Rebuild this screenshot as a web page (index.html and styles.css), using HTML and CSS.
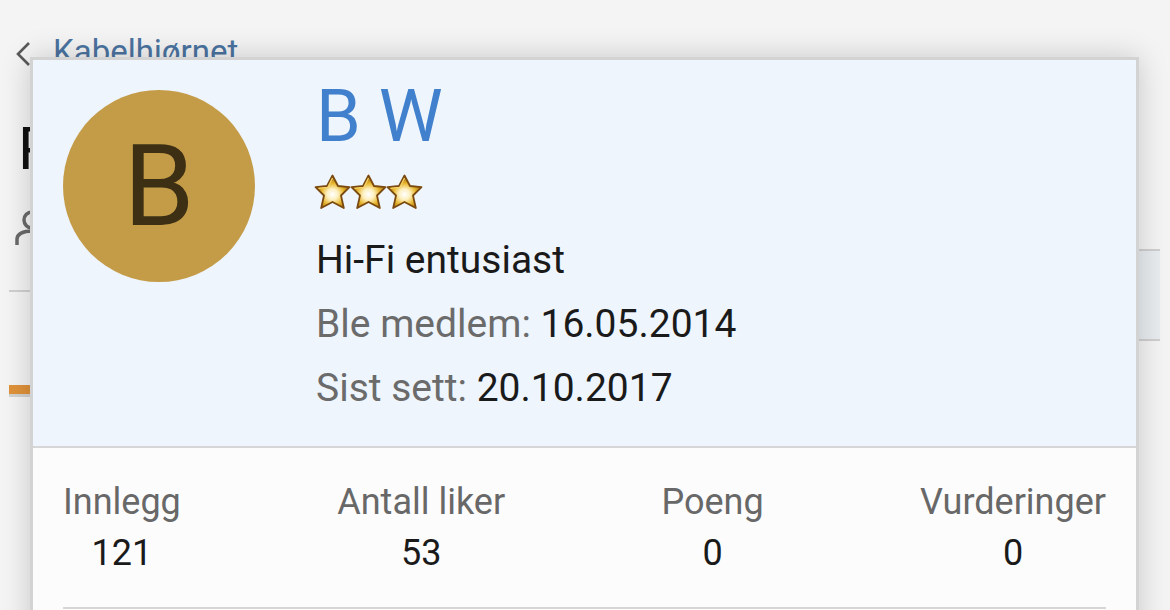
FILE: index.html
```html
<!DOCTYPE html>
<html lang="no">
<head>
<meta charset="utf-8">
<title>Profil</title>
<link rel="stylesheet" href="styles.css">
</head>
<body>
<div class="page">
  <div class="topbar">
    <svg class="chev" width="18" height="26" viewBox="0 0 18 26"><path d="M15 2 L4 13 L15 24" fill="none" stroke="#5a5a5a" stroke-width="2.6"/></svg>
    <span class="crumb">Kabelhjørnet</span>
  </div>
  <div class="head">
    <div class="head-main">
      <div class="title">Profil</div>
      <div class="user-row">
        <svg width="34" height="36" viewBox="0 0 34 36"><circle cx="17" cy="10" r="8" fill="none" stroke="#6a6a6a" stroke-width="3.5"/><path d="M2 35 V29 C2 24 8 21 17 21 C26 21 32 24 32 29 V35" fill="none" stroke="#6a6a6a" stroke-width="3.5"/></svg>
      </div>
    </div>
    <div class="follow"></div>
  </div>
  <div class="tabs"><div class="tab active"></div><div class="tab"></div></div>
</div>

<div class="popup">
  <div class="pop-top">
    <div class="avatar">B</div>
    <div class="info">
      <div class="name">B W</div>
      <div class="stars">
        <svg width="37" height="36" viewBox="0 0 37 36"><use href="#star"/></svg>
        <svg width="37" height="36" viewBox="0 0 37 36"><use href="#star"/></svg>
        <svg width="37" height="36" viewBox="0 0 37 36"><use href="#star"/></svg>
      </div>
      <div class="line rank">Hi-Fi entusiast</div>
      <div class="line"><span class="lbl">Ble medlem:</span> 16.05.2014</div>
      <div class="line"><span class="lbl">Sist sett:</span> 20.10.2017</div>
    </div>
  </div>
  <div class="pop-stats">
    <div class="stat"><div class="s-lbl">Innlegg</div><div class="s-val">121</div></div>
    <div class="stat"><div class="s-lbl">Antall liker</div><div class="s-val">53</div></div>
    <div class="stat"><div class="s-lbl">Poeng</div><div class="s-val">0</div></div>
    <div class="stat"><div class="s-lbl">Vurderinger</div><div class="s-val">0</div></div>
  </div>
  <div class="pop-rule"></div>
</div>

<svg width="0" height="0" class="defs">
  <defs>
    <radialGradient id="sg" cx="0.5" cy="0.58" r="0.55">
      <stop offset="0" stop-color="#ffffff"/>
      <stop offset="0.3" stop-color="#fdf0c0"/>
      <stop offset="0.62" stop-color="#e6b52c"/>
      <stop offset="1" stop-color="#9c6410"/>
    </radialGradient>
    <symbol id="star" viewBox="0 0 37 36">
      <path d="M18.5 1.5 L24 12 L35.5 13.2 L27 21.5 L29.8 34 L18.5 28 L7.2 34 L10 21.5 L1.5 13.2 L13 12 Z" fill="url(#sg)" stroke="#7a4a10" stroke-width="1.8" stroke-linejoin="round"/>
      <path d="M18.5 4 L13.8 13.3 L4.5 14.3" fill="none" stroke="#f6d46a" stroke-width="1.2"/>
    </symbol>
  </defs>
</svg>
</body>
</html>
```

FILE: styles.css
```css
html, body {
  margin: 0;
  padding: 0;
}
body {
  width: 1170px;
  height: 610px;
  overflow: hidden;
  background: #f4f4f4;
  font-family: Roboto, "Noto Sans", "Liberation Sans", sans-serif;
  position: relative;
}
.defs {
  position: absolute;
}
.page {
  padding: 0 10px 0 9px;
}
.topbar {
  height: 104px;
  display: flex;
  align-items: flex-start;
  padding-top: 41px;
  box-sizing: border-box;
  padding-left: 5px;
}
.chev {
  display: block;
}
.crumb {
  margin-left: 21px;
  font-size: 33px;
  line-height: 33px;
  margin-top: -6px;
  color: #4a73a0;
}
.head {
  display: flex;
  align-items: flex-start;
}
.head-main {
  flex: 1;
  border-bottom: 2px solid #d0d0d0;
  height: 186px;
}
.title {
  font-size: 60px;
  line-height: 70px;
  margin-top: 10px;
  padding-left: 9px;
  color: #111;
}
.user-row {
  margin-top: 26px;
  padding-left: 6px;
}
.user-row svg {
  display: block;
}
.follow {
  width: 220px;
  margin-top: 145px;
  height: 88px;
  border-top: 2px solid #cfcfcf;
  border-bottom: 2px solid #cfcfcf;
  background: #e9ecef;
}
.tabs {
  display: flex;
  height: 53px;
  align-items: flex-end;
  width: 1000px;
  border-bottom: 3px solid #d2d2d2;
}
.tab {
  width: 200px;
  height: 9px;
}
.tab.active {
  background: #e0923a;
}

/* popup */
.popup {
  position: absolute;
  left: 30px;
  top: 57px;
  width: 1103px;
  height: 600px;
  border: 3px solid #d3d3d3;
  background: #fcfcfc;
  box-shadow: 0 0 28px rgba(0, 0, 0, 0.18);
}
.pop-top {
  display: flex;
  align-items: flex-start;
  background: #eef5fd;
  border-bottom: 2px solid #d6d6d6;
  padding: 21px 30px 0 30px;
  height: 388px;
  box-sizing: border-box;
}
.avatar {
  width: 192px;
  height: 192px;
  margin-top: 9px;
  border-radius: 50%;
  background: #c49c48;
  color: #3c2f13;
  font-size: 114px;
  line-height: 1;
  display: flex;
  align-items: center;
  justify-content: center;
  flex-shrink: 0;
}
.info {
  margin-left: 61px;
}
.name {
  font-size: 72px;
  line-height: 72px;
  color: #4080cc;
}
.stars {
  display: flex;
  margin-top: 21px;
  height: 36px;
  margin-left: -2px;
}
.stars svg {
  display: block;
  margin-right: -1px;
}
.line {
  font-size: 39px;
  line-height: 64px;
  color: #1a1a1a;
}
.rank {
  margin-top: 18px;
}
.lbl {
  color: #6b6b6b;
}
.pop-stats {
  display: flex;
  justify-content: space-between;
  padding: 29px 30px 0 30px;
}
.stat {
  display: flex;
  flex-direction: column;
  align-items: center;
}
.s-lbl {
  font-size: 36px;
  line-height: 51px;
  color: #686868;
}
.s-val {
  font-size: 36px;
  line-height: 51px;
  color: #1a1a1a;
}
.pop-rule {
  margin: 28px 30px 0 30px;
  height: 2px;
  background: #d6d6d6;
}
```
